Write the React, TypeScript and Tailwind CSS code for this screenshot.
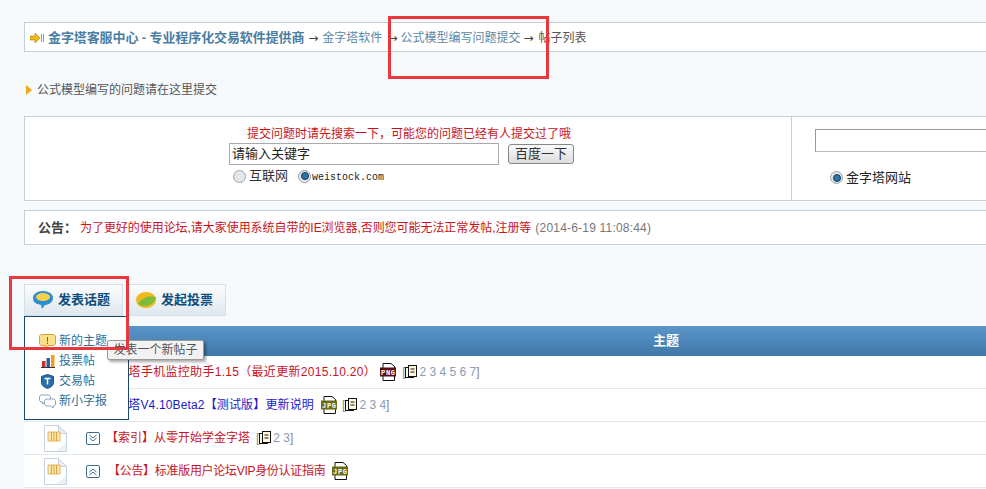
const cjk = "font-['Liberation_Sans','Noto_Sans_CJK_SC',sans-serif]";

const Radio = ({ checked }: { checked?: boolean }) => (
  <span className="flex h-[13px] w-[13px] shrink-0 items-center justify-center rounded-full border border-[#9aa4ad] bg-[#e4e7ea]">
    {checked && <span className="h-[8px] w-[8px] rounded-full border border-[#0d3a5c] bg-[#2f75a5]" />}
  </span>
);

const Arrow = ({ className }: { className: string }) => (
  <span className={`w-[12px] font-['DejaVu_Sans',sans-serif] text-[12px] leading-none text-[#444] ${className}`}>→</span>
);

const FileBadge = ({ label, color }: { label: string; color: string }) => (
  <svg width="17" height="18" viewBox="0 0 17 18" className="shrink-0">
    <path d="M3 .5h8l3.500 3v14H3z" fill="#fff" stroke="#111" />
    <rect x="0" y="4.500" width="16" height="9" fill={color} />
    <text x="8" y="11.500" textAnchor="middle" fontSize="7" fontWeight="700" fill="#fff" textLength="14" fontFamily="Liberation Mono">
      {label}
    </text>
  </svg>
);

const Pages = ({ nums }: { nums: string }) => (
  <span className="flex items-center text-[12px] text-[#8a9bb5]">
    <span className="text-[#888]">[</span>
    <svg width="13" height="14" viewBox="0 0 13 14" className="mr-[1px]">
      <rect x=".5" y="2.500" width="8" height="10" fill="#fff8dc" stroke="#111" />
      <rect x="3.500" y=".5" width="8" height="11" fill="#fff8dc" stroke="#111" />
      <path d="M5.500 4h4M5.500 7h4" stroke="#111" />
    </svg>
    <span>{nums}</span>
    <span className="text-[#888]">]</span>
  </span>
);

const FolderIcon = () => (
  <svg width="23" height="27" viewBox="0 0 23 27">
    <path d="M.5.5h14l8 8v18H.5z" fill="#fff" stroke="#c5d2dd" />
    <path d="M14.500.5v8h8z" fill="#e8eef3" stroke="#c5d2dd" />
    <path d="M4 7h12v9H4z" fill="#fbe7ac" stroke="#e6b65a" />
    <path d="M7.500 7v9M10 7v9M12.500 7v9" stroke="#d9a441" />
    <path d="M12 26l10-8v8z" fill="#eef2f6" />
  </svg>
);

const Chevron = ({ up }: { up?: boolean }) => (
  <svg width="14" height="13" viewBox="0 0 14 13">
    <rect x=".5" y=".5" width="13" height="12" rx="1.500" fill="#fff" stroke="#3f6b8f" />
    {up ? (
      <path d="M3.500 7l3.500-3 3.500 3M3.500 10l3.500-3 3.500 3" fill="none" stroke="#3f6b8f" />
    ) : (
      <path d="M3.500 3l3.500 3 3.500-3M3.500 6l3.500 3 3.500-3" fill="none" stroke="#3f6b8f" />
    )}
  </svg>
);

const Row = ({ children, indent }: { children: React.ReactNode; indent: string }) => (
  <div className="flex h-[33px] items-center border-b border-[#e3e8ec] bg-white">
    <div className="flex w-[62px] justify-center pl-[1px]">
      <FolderIcon />
    </div>
    <div className={`flex items-center ${indent}`}>{children}</div>
  </div>
);

const MenuItem = ({ icon, label }: { icon: React.ReactNode; label: string }) => (
  <div className="flex h-[20px] items-center gap-[3px] pl-[14px] text-[12px] text-[#2f6f95]">
    <span className="flex w-[17px] justify-center">{icon}</span>
    {label}
  </div>
);

const ActionButton = ({ icon, label }: { icon: React.ReactNode; label: string }) => (
  <div className="flex h-[32px] w-[99px] items-center gap-[4px] border border-[#d5dfe6] bg-gradient-to-b from-[#fbfcfd] to-[#dfe8ee] pl-[7px] text-[13px] font-bold text-[#0d4d7d]">
    {icon}
    {label}
  </div>
);

export default function App() {
  return (
    <div className={`relative h-[489px] w-[986px] overflow-hidden bg-[#f5f9fc] text-[12px] ${cjk}`}>
      <div className="ml-[24px] w-[1200px] pt-[22px]">
        <div className="flex h-[30px] items-center border border-[#c3d0d9] bg-white pl-[5px] pt-[1px] text-[#555]">
          <svg width="14" height="10" viewBox="0 0 14 10" className="mr-[4px]">
            <path d="M0 3h5V0l5 5-5 5V7H0z" fill="#f2b90f" stroke="#a87a00" strokeWidth=".6" />
            <path d="M11.500 1v8M13.500 1v8" stroke="#c9950a" />
          </svg>
          <span className="text-[13px] font-bold tracking-[-0.1px] text-[#4a7da3]">金字塔客服中心 - 专业程序化交易软件提供商</span>
          <Arrow className="ml-[4px] mr-[2px]" />
          <span className="text-[#5b87a8]">金字塔软件</span>
          <Arrow className="ml-[5px] mr-[1px]" />
          <span className="text-[#5b87a8]">公式模型编写问题提交</span>
          <Arrow className="ml-[3px] mr-[3px]" />
          <span>帖子列表</span>
        </div>

        <div className="mt-[28px] flex h-[20px] items-center gap-[5px] pl-[2px] text-[#555]">
          <span className="h-0 w-0 border-y-[5px] border-l-[6px] border-y-transparent border-l-[#efab12]" />
          公式模型编写的问题请在这里提交
        </div>

        <div className="mt-[16px] flex h-[85px] border border-[#c3d0d9] bg-white">
          <div className="w-[767px] shrink-0 border-r border-[#c3d0d9] pl-[204px] pt-[9px]">
            <div className="pl-[18px] leading-[16px] text-[#c8141c]">提交问题时请先搜索一下，可能您的问题已经有人提交过了哦</div>
            <div className="mt-[1px] flex items-center gap-[9px]">
              <div className="flex h-[22px] w-[270px] items-center border border-[#aaa] pl-[2px] text-[13px] text-[#222]">请输入关键字</div>
              <div className="flex h-[20px] w-[66px] items-center justify-center rounded-[3px] border border-[#888] bg-gradient-to-b from-[#fafafa] to-[#dcdcdc] text-[13px] text-[#333]">百度一下</div>
            </div>
            <div className="mt-[3px] flex h-[16px] items-center pl-[4px] text-[13px] text-[#333]">
              <Radio />
              <span className="ml-[3px] mr-[10px]">互联网</span>
              <Radio checked />
              <span className="ml-[1px] mt-[3px] font-['Liberation_Mono',monospace] text-[10px] text-[#222]">weistock.com</span>
            </div>
          </div>
          <div className="pl-[23px] pt-[12px]">
            <div className="h-[23px] w-[320px] border border-[#999] border-b-[#bbb] border-r-[#bbb] bg-white" />
            <div className="mt-[16px] flex items-center gap-[3px] pl-[15px] text-[13px] text-[#222]">
              <Radio checked />
              金字塔网站
            </div>
          </div>
        </div>

        <div className="mt-[9px] flex h-[35px] items-center border border-[#c3d0d9] bg-white pl-[13px]">
          <span className="mr-[3px] text-[13px] font-bold text-[#444]">公告：</span>
          <span className="tracking-[-0.05px] text-[#c8141c]">为了更好的使用论坛,请大家使用系统自带的IE浏览器,否则您可能无法正常发帖,注册等</span>
          <span className="ml-[4px] tracking-[0.2px] text-[#777]">(2014-6-19 11:08:44)</span>
        </div>

        <div className="mt-[39px] flex gap-[4px]">
          <ActionButton
            label="发表话题"
            icon={
              <svg width="22" height="20" viewBox="0 0 22 20">
                <path d="M11 1c6 0 10 3 10 7s-4 7-8 7l-3 4-1-4C4 14 1 12 1 8s4-7 10-7z" fill="#2e8fd0" />
                <ellipse cx="11" cy="7" rx="7" ry="4" fill="#f6d24a" />
              </svg>
            }
          />
          <ActionButton
            label="发起投票"
            icon={
              <svg width="22" height="18" viewBox="0 0 22 18">
                <ellipse cx="11" cy="9" rx="10" ry="8" fill="#f0b91e" />
                <path d="M3 13C8 5 15 5 21 6c-1 7-10 12-18 7z" fill="#7dbb3a" />
              </svg>
            }
          />
        </div>

        <div className="mt-[10px] flex h-[30px] items-center bg-gradient-to-b from-[#5b94c8] to-[#3f79a9] pl-[629px] text-[13px] font-bold text-white">
          主题
        </div>

        <Row indent="pl-[18px]">
          <span className="mr-[4px] tracking-[0.3px] text-[#c8141c]">金字塔手机监控助手1.15（最近更新2015.10.20）</span>
          <FileBadge label="PNG" color="#5c0f16" />
          <span className="ml-[5px]">
            <Pages nums="2 3 4 5 6 7" />
          </span>
        </Row>
        <Row indent="pl-[18px]">
          <span className="mr-[7px] tracking-[0.15px] text-[#1a1ac8]">金字塔V4.10Beta2【测试版】更新说明</span>
          <FileBadge label="JPG" color="#6b6b16" />
          <span className="ml-[4px]">
            <Pages nums="2 3 4" />
          </span>
        </Row>
        <Row indent="">
          <Chevron />
          <span className="ml-[6px] mr-[6px] text-[#c8141c]">【索引】从零开始学金字塔</span>
          <Pages nums="2 3" />
        </Row>
        <Row indent="">
          <Chevron up />
          <span className="ml-[8px] mr-[7px] tracking-[-0.3px] text-[#c8141c]">【公告】标准版用户论坛VIP身份认证指南</span>
          <FileBadge label="JPG" color="#6b6b16" />
        </Row>
      </div>

      <div className="absolute left-[24px] top-[316px] h-[104px] w-[105px] border border-[#174a6e] bg-white pt-[14px]">
        <MenuItem
          label="新的主题"
          icon={
            <svg width="17" height="15" viewBox="0 0 17 15">
              <path d="M2 .5h13l1.500 1.500v8L15 11.500H9L6 14v-2.500H2L.5 10V2z" fill="#fbe08a" stroke="#d4a33a" />
              <path d="M8.500 3v4.500M8.500 8.500v1.500" stroke="#c0392b" />
            </svg>
          }
        />
        <MenuItem
          label="投票帖"
          icon={
            <svg width="14" height="14" viewBox="0 0 14 14">
              <rect x="1" y="7" width="3.500" height="6" fill="#c9302c" />
              <rect x="5.500" y="4" width="3.500" height="9" fill="#2a5f9e" />
              <rect x="10" y="1" width="3.500" height="12" fill="#e9a21f" />
              <path d="M0 13.500h14" stroke="#333" />
            </svg>
          }
        />
        <MenuItem
          label="交易帖"
          icon={
            <svg width="13" height="15" viewBox="0 0 13 15">
              <path d="M6.500.5l6 2v6c0 3-3 5-6 6-3-1-6-3-6-6v-6z" fill="#2a6ea8" stroke="#1d4f7c" />
              <path d="M3.500 4.500h6M6.500 4.500v6" stroke="#fff" strokeWidth="1.500" />
            </svg>
          }
        />
        <MenuItem
          label="新小字报"
          icon={
            <svg width="17" height="15" viewBox="0 0 17 15">
              <path d="M2 1h8l1.500 1.500v4L10 8H6L3.500 10V8H2L.5 6.500v-4z" fill="#fff" stroke="#8aa3b8" />
              <path d="M7 5h8l1.500 1.500v4L15 12h-1v2l-2.500-2H7l-1.500-1.500v-4z" fill="#fff" stroke="#8aa3b8" />
            </svg>
          }
        />
      </div>

      <div className="absolute left-[107px] top-[340px] flex h-[20px] w-[97px] items-center justify-center rounded-[2px] border border-[#999] bg-[#f2f2f2] text-[#555] shadow-[2px_2px_3px_rgba(0,0,0,0.35)]">
        发表一个新帖子
      </div>

      <div className="absolute left-[388px] top-[16px] h-[63px] w-[161px] border-[3px] border-[#e8383d]" />
      <div className="absolute left-[9px] top-[276px] h-[74px] w-[120px] border-[3px] border-[#e8383d]" />
    </div>
  );
}
